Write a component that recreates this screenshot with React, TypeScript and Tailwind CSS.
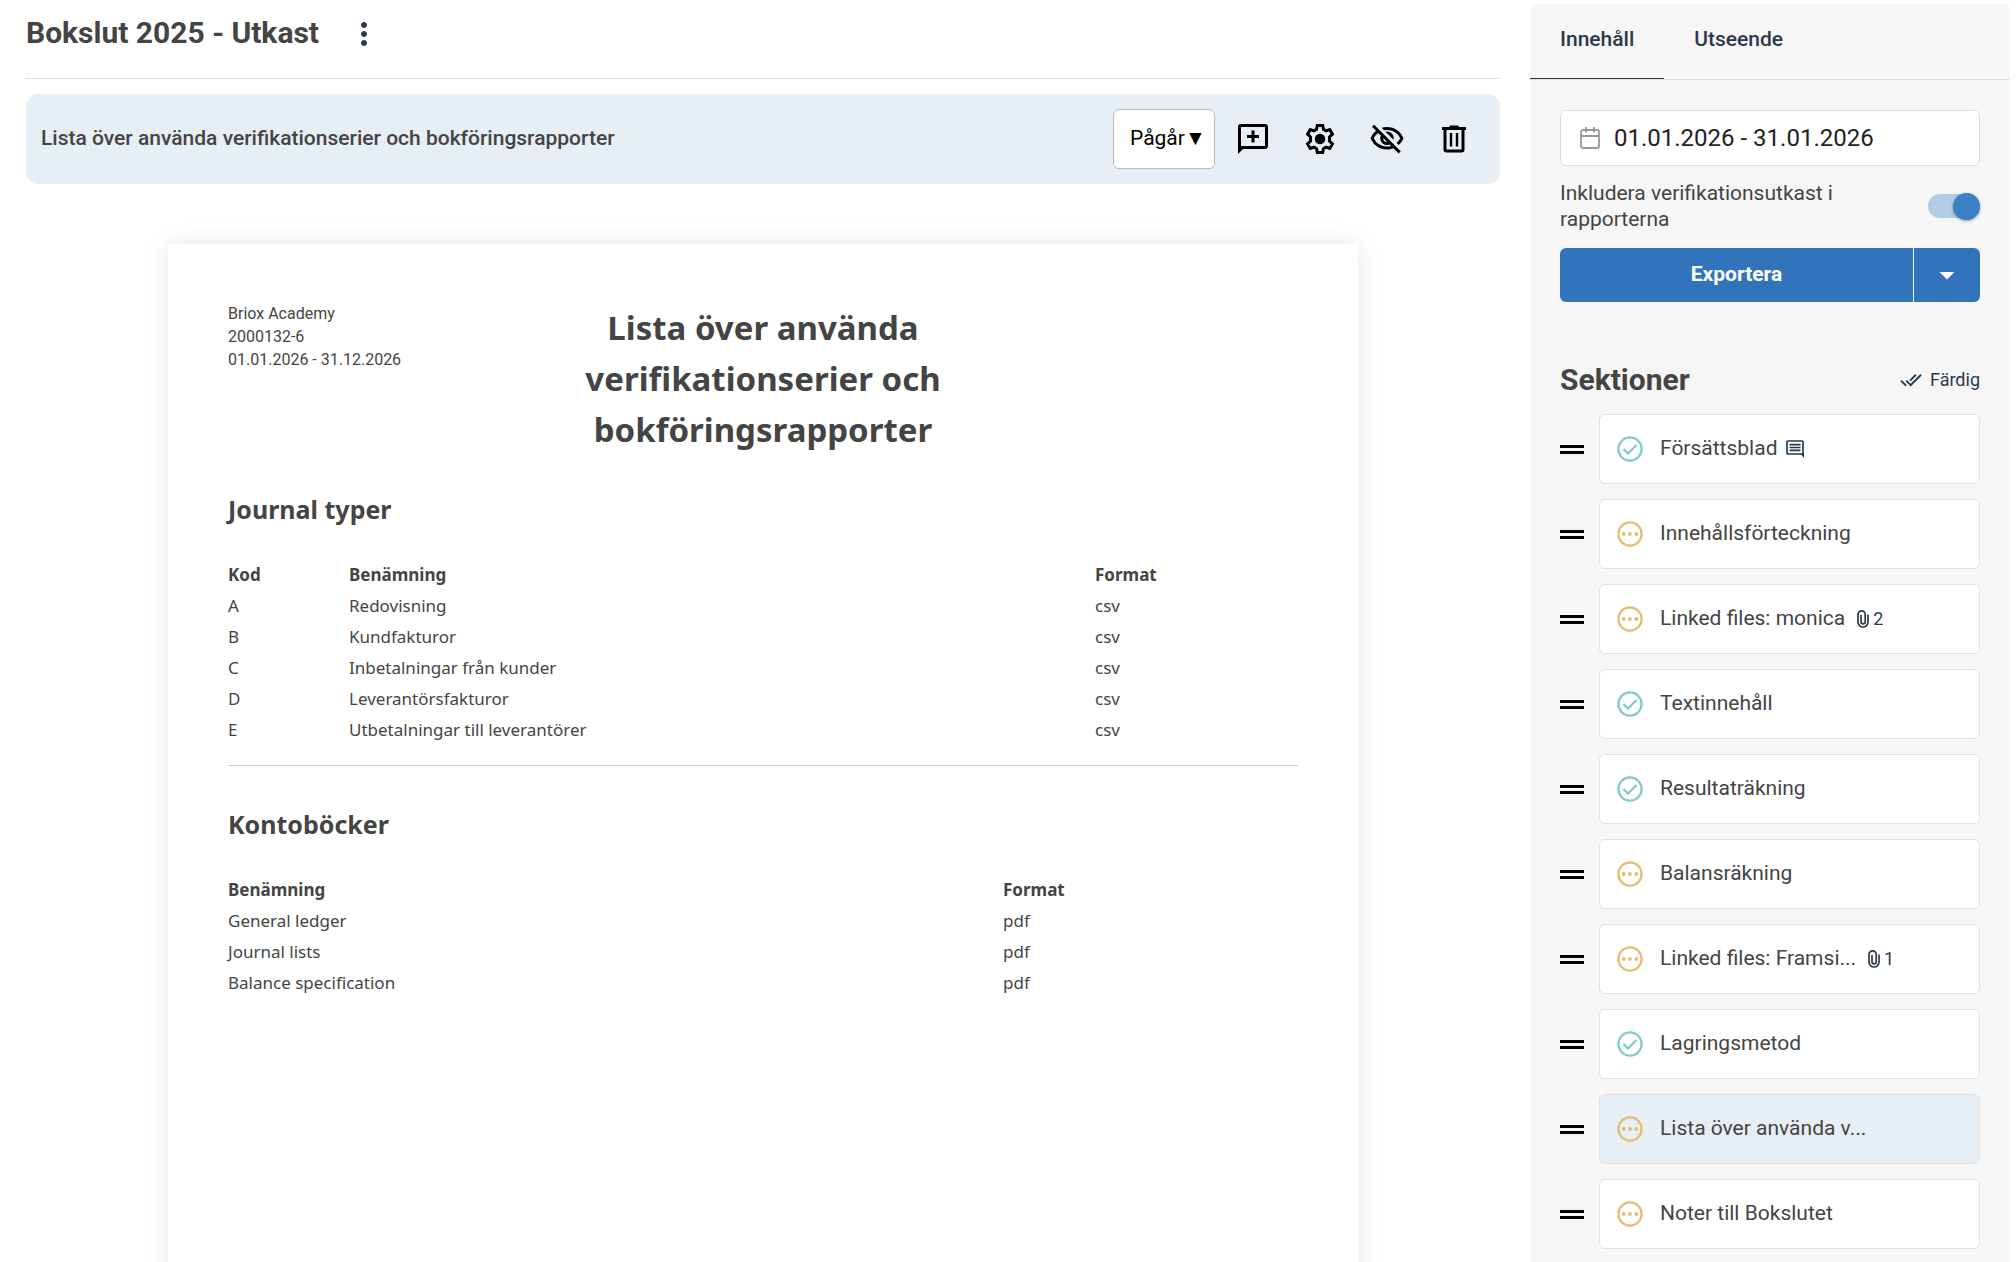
import { useState } from 'react'
import clsx from 'clsx'
import { MdMoreVert, MdOutlineVisibilityOff, MdDoneAll, MdArrowDropDown } from 'react-icons/md'

type Status = 'done' | 'ongoing'

type Section = {
  title: string
  status: Status
  comment?: boolean
  files?: number
}

const SECTIONS: Section[] = [
  { title: 'Försättsblad', status: 'done', comment: true },
  { title: 'Innehållsförteckning', status: 'ongoing' },
  { title: 'Linked files: monica', status: 'ongoing', files: 2 },
  { title: 'Textinnehåll', status: 'done' },
  { title: 'Resultaträkning', status: 'done' },
  { title: 'Balansräkning', status: 'ongoing' },
  { title: 'Linked files: Framsi...', status: 'ongoing', files: 1 },
  { title: 'Lagringsmetod', status: 'done' },
  { title: 'Lista över använda v...', status: 'ongoing' },
  { title: 'Noter till Bokslutet', status: 'ongoing' },
]

const JOURNALS = [
  ['A', 'Redovisning', 'csv'],
  ['B', 'Kundfakturor', 'csv'],
  ['C', 'Inbetalningar från kunder', 'csv'],
  ['D', 'Leverantörsfakturor', 'csv'],
  ['E', 'Utbetalningar till leverantörer', 'csv'],
]

const LEDGERS = [
  ['General ledger', 'pdf'],
  ['Journal lists', 'pdf'],
  ['Balance specification', 'pdf'],
]

function AddCommentIcon() {
  return (
    <svg viewBox="0 0 36 36" className="size-9" fill="none" stroke="currentColor" strokeWidth="3" aria-hidden>
      <path d="M4.5 29V6q0-1.5 1.5-1.5h24q1.5 0 1.5 1.5v19q0 1.5-1.5 1.5H8" />
      <path fill="currentColor" stroke="none" d="M3 33V25h8z" />
      <path d="M18 9.5v12M12 15.5h12" />
    </svg>
  )
}

function GearIcon() {
  return (
    <svg viewBox="0 0 24 24" className="size-9" fill="none" stroke="currentColor" strokeWidth="2" aria-hidden>
      <path d="M10.2 3h3.6l.5 2.6 1.7 1 2.5-.9 1.8 3.1-2 1.8v2.8l2 1.8-1.8 3.1-2.5-.9-1.7 1-.5 2.6h-3.6l-.5-2.6-1.7-1-2.5.9-1.8-3.1 2-1.8v-2.8l-2-1.8 1.8-3.1 2.5.9 1.7-1z" />
      <circle cx="12" cy="12" r="3.5" fill="currentColor" stroke="none" />
    </svg>
  )
}

function TrashIcon() {
  return (
    <svg viewBox="0 0 24 24" className="size-9" fill="none" stroke="currentColor" aria-hidden>
      <path strokeWidth="2" d="M4 5h16M6 5v14q0 1 1 1h10q1 0 1-1V5M9 4h6" />
      <path strokeWidth="1.6" d="M10 8v9M14 8v9" />
    </svg>
  )
}

function CalendarIcon() {
  return (
    <svg viewBox="0 0 20 22" className="h-[22px] w-5 text-[#999]" fill="none" stroke="currentColor" aria-hidden>
      <rect x="1" y="3" width="18" height="18" rx="2" strokeWidth="1.8" />
      <path strokeWidth="1.8" d="M1 9h18M6 0v5.5M14 0v5.5" />
    </svg>
  )
}

function CommentIcon() {
  return (
    <svg viewBox="0 0 18 18" className="size-[18px]" fill="none" stroke="currentColor" strokeWidth="1.7" aria-hidden>
      <path d="M17 15V2q0-1-1-1H2Q1 1 1 2v11q0 1 1 1h13" />
      <path fill="currentColor" stroke="none" d="M14 13.2h4V18z" />
      <path d="M3.5 4.6h11M3.5 7.5h11M3.5 10.4h11" />
    </svg>
  )
}

function ClipIcon() {
  return (
    <svg viewBox="0 0 12 18" className="h-[18px] w-3" fill="none" stroke="currentColor" strokeWidth="1.7" aria-hidden>
      <path d="M11 4.5V12a5 5 0 0 1-10 0V4.5a3.5 3.5 0 0 1 7.2 0v7.2a2 2 0 0 1-4.2 0V5" />
    </svg>
  )
}

function StatusIcon({ status }: { status: Status }) {
  return (
    <svg
      viewBox="0 0 26 26"
      className={clsx('size-[26px] shrink-0', status === 'done' ? 'text-[#83cbc6]' : 'text-[#e3bd70]')}
      fill="none"
      stroke="currentColor"
      strokeWidth="2.3"
      aria-hidden
    >
      <circle cx="13" cy="13" r="11.6" />
      {status === 'done' ? (
        <path d="m6.5 13 4.5 4.5 8.5-8.5" />
      ) : (
        <g fill="currentColor" stroke="none">
          <circle cx="6.7" cy="13" r="1.9" />
          <circle cx="13" cy="13" r="1.9" />
          <circle cx="19.3" cy="13" r="1.9" />
        </g>
      )}
    </svg>
  )
}

function SectionRow({ section, active, onSelect }: { section: Section; active: boolean; onSelect: () => void }) {
  return (
    <li className="flex items-center gap-[15px]">
      <span className="h-[9px] w-6 shrink-0 border-y-[3px] border-black" aria-hidden />
      <button
        type="button"
        onClick={onSelect}
        className={clsx(
          'flex h-[70px] flex-1 items-center rounded-md border border-[#e2e2e2] pl-[17px] text-left text-[21px]',
          active ? 'bg-[#e7eef4]' : 'bg-white',
        )}
      >
        <StatusIcon status={section.status} />
        <span className="ml-[17px]">{section.title}</span>
        {section.comment && (
          <span className="ml-2 text-[#2b3a4a]">
            <CommentIcon />
          </span>
        )}
        {section.files && (
          <span className="ml-3 flex items-center gap-1 text-lg text-[#2b3a4a]">
            <ClipIcon />
            {section.files}
          </span>
        )}
      </button>
    </li>
  )
}

function Report() {
  return (
    <article className="mx-auto mt-[60px] min-h-[1684px] w-[1190px] max-w-full bg-white px-[60px] pt-[58px] shadow-[0_0_24px_rgba(0,0,0,0.1)]">
      <header className="grid grid-cols-[1fr_380px_1fr]">
        <address className="text-base leading-[23px] not-italic">
          Briox Academy
          <br />
          2000132-6
          <br />
          01.01.2026 - 31.12.2026
        </address>
        <h2 className="text-center font-['Noto_Sans',sans-serif] text-[33px] leading-[51px] font-bold">
          Lista över använda verifikationserier och bokföringsrapporter
        </h2>
      </header>

      <div className="font-['Noto_Sans',sans-serif] text-[17px] leading-[31px]">
        <h3 className="mt-[34px] text-[25px] leading-10 font-bold">Journal typer</h3>
        <table className="mt-[30px] w-full table-fixed text-left">
          <thead>
            <tr>
              <th className="w-[121px] font-bold">Kod</th>
              <th className="font-bold">Benämning</th>
              <th className="w-[203px] font-bold">Format</th>
            </tr>
          </thead>
          <tbody>
            {JOURNALS.map(([code, name, format]) => (
              <tr key={code}>
                <td>{code}</td>
                <td>{name}</td>
                <td>{format}</td>
              </tr>
            ))}
          </tbody>
        </table>
        <hr className="mt-5 border-[#cccccc]" />
        <h3 className="mt-[38px] text-[25px] leading-10 font-bold">Kontoböcker</h3>
        <table className="mt-[30px] w-full table-fixed text-left">
          <thead>
            <tr>
              <th className="font-bold">Benämning</th>
              <th className="w-[295px] font-bold">Format</th>
            </tr>
          </thead>
          <tbody>
            {LEDGERS.map(([name, format]) => (
              <tr key={name}>
                <td>{name}</td>
                <td>{format}</td>
              </tr>
            ))}
          </tbody>
        </table>
      </div>
    </article>
  )
}

export default function App() {
  const [tab, setTab] = useState('Innehåll')
  const [selected, setSelected] = useState(8)

  return (
    <div className="flex h-screen overflow-hidden bg-white font-['Roboto',sans-serif] text-[#444444]">
      <main className="flex min-w-0 flex-1 flex-col pr-[30px] pl-[26px]">
        <header className="flex h-[79px] shrink-0 items-start gap-[27px] border-b border-[#e0e0e0] pt-[13px]">
          <h1 className="text-[30px] leading-10 font-bold">Bokslut 2025 - Utkast</h1>
          <button type="button" aria-label="Fler val" className="mt-[3px] text-[#2b3a4a]">
            <MdMoreVert className="size-9" />
          </button>
        </header>

        <div className="mt-[15px] flex h-[90px] shrink-0 items-center rounded-xl bg-[#e7eef4] pr-7 pl-[15px]">
          <h2 className="flex-1 text-[21px] font-medium">Lista över använda verifikationserier och bokföringsrapporter</h2>
          <select
            aria-label="Status"
            className="h-[60px] w-[102px] appearance-none rounded-md border border-[#bbbbbb] bg-white pl-4 text-[21px] text-black"
          >
            <option>Pågår▼</option>
            <option>Färdig▼</option>
          </select>
          <div className="ml-5 flex gap-[31px] text-black">
            <button type="button" aria-label="Kommentera">
              <AddCommentIcon />
            </button>
            <button type="button" aria-label="Inställningar">
              <GearIcon />
            </button>
            <button type="button" aria-label="Dölj">
              <MdOutlineVisibilityOff className="size-9" />
            </button>
            <button type="button" aria-label="Ta bort">
              <TrashIcon />
            </button>
          </div>
        </div>

        <Report />
      </main>

      <aside className="mt-1 mr-[6px] w-[480px] shrink-0 rounded-t-md bg-[#f6f6f6]">
        <nav className="flex h-[76px] border-b border-[#e0e0e0]">
          {['Innehåll', 'Utseende'].map((name) => (
            <button
              key={name}
              type="button"
              onClick={() => setTab(name)}
              className={clsx(
                'border-b px-[30px] pb-0.5 text-[21px] font-medium text-[#2b3a4a]',
                tab === name ? 'border-[#2b3a4a]' : 'border-transparent',
              )}
            >
              {name}
            </button>
          ))}
        </nav>

        <div className="px-[30px] pt-[30px]">
          <label className="flex h-14 items-center gap-[14px] rounded-md border border-[#dddddd] bg-white px-[19px]">
            <CalendarIcon />
            <input
              aria-label="Period"
              defaultValue="01.01.2026 - 31.01.2026"
              className="min-w-0 flex-1 text-2xl text-[#222222] outline-none"
            />
          </label>

          <label className="mt-[14px] flex items-center justify-between text-[21px] leading-[26px]">
            <span className="w-[300px]">Inkludera verifikationsutkast i rapporterna</span>
            <input type="checkbox" defaultChecked className="peer sr-only" />
            <span className="flex h-6 w-[52px] items-center rounded-full bg-[#b3cce5] peer-checked:justify-end">
              <span className="size-[27px] shrink-0 rounded-full bg-[#3a80c5] shadow-[0_1px_3px_rgba(0,0,0,0.4)]" />
            </span>
          </label>

          <div className="mt-4 flex h-[54px] overflow-hidden rounded-md bg-[#3174bb] text-white">
            <button type="button" className="flex-1 text-[21px] font-bold">
              Exportera
            </button>
            <button
              type="button"
              aria-label="Fler exportval"
              className="flex w-[67px] items-center justify-center border-l border-white"
            >
              <MdArrowDropDown className="size-9" />
            </button>
          </div>

          <div className="mt-[58px] flex items-center justify-between">
            <h2 className="text-[30px] leading-10 font-bold">Sektioner</h2>
            <button type="button" className="flex items-center gap-2 text-lg text-[#2b3a4a]">
              <MdDoneAll className="size-[22px]" />
              Färdig
            </button>
          </div>

          <ul className="mt-[14px] flex flex-col gap-[15px]">
            {SECTIONS.map((section, i) => (
              <SectionRow
                key={section.title}
                section={section}
                active={i === selected}
                onSelect={() => setSelected(i)}
              />
            ))}
          </ul>
        </div>
      </aside>
    </div>
  )
}
